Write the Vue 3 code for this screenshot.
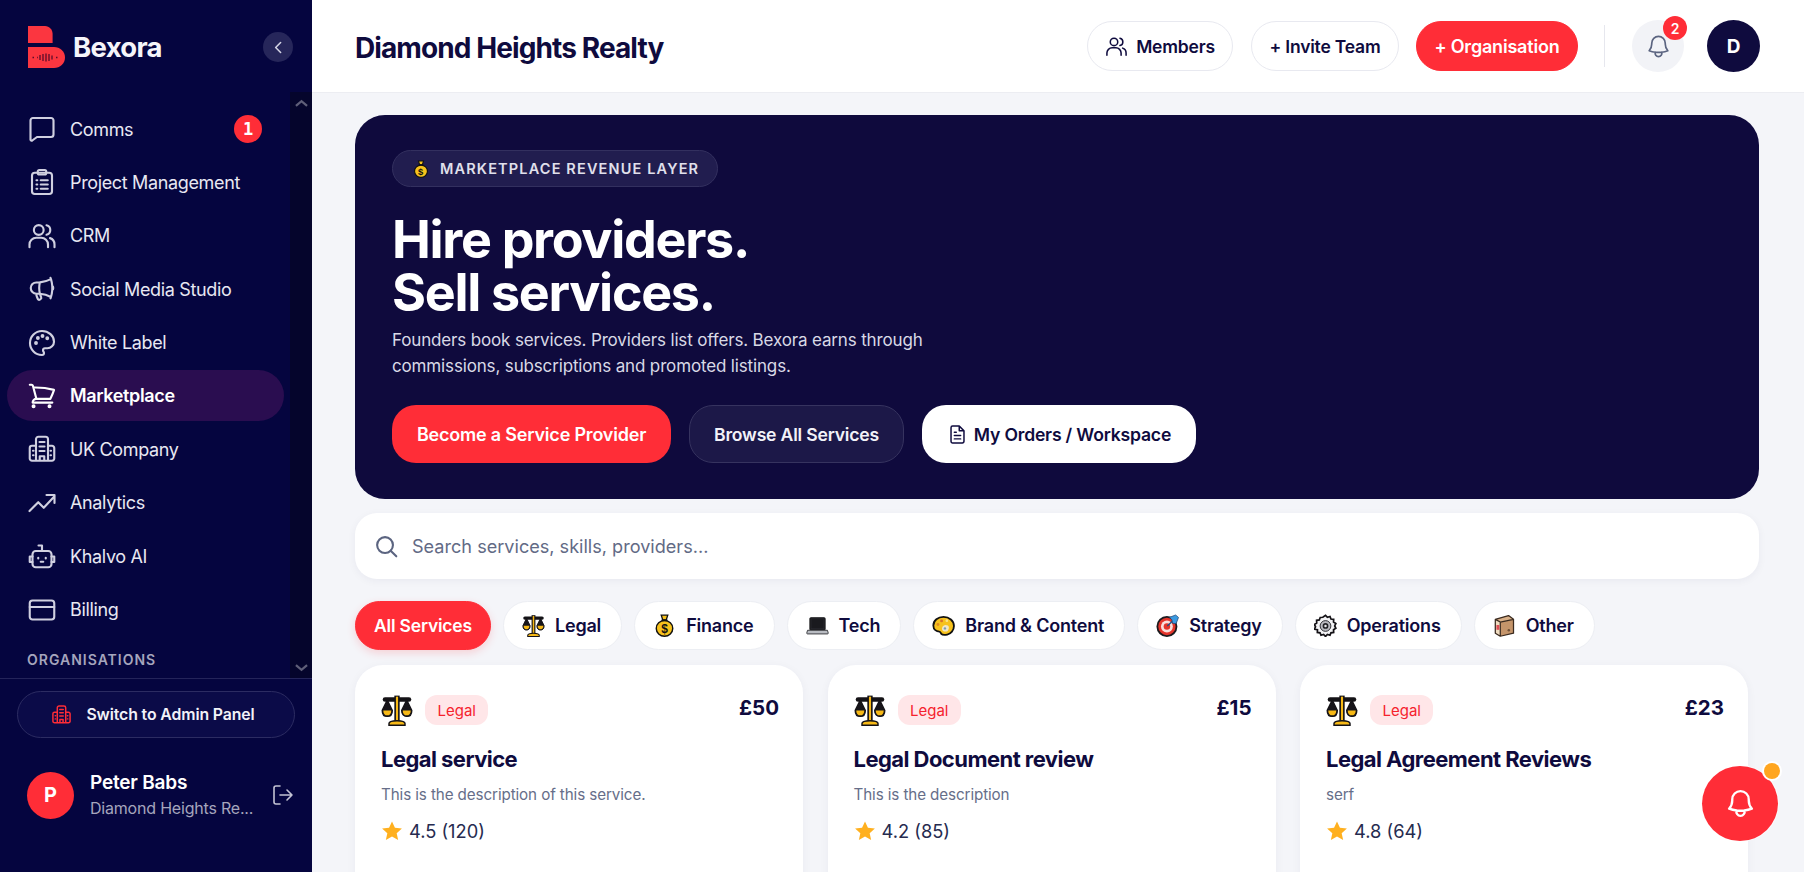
<script setup>
const icons = {
  comms: '<path d="M2.800 5.200A2 2 0 0 1 4.800 3.200h14.400a2 2 0 0 1 2 2v11.200a2 2 0 0 1-2 2H8l-3.800 2.800a.9.9 0 0 1-1.400-.7z"/>',
  project: '<rect x="4" y="4.600" width="16" height="17" rx="2.200"/><rect x="8.600" y="2.400" width="6.800" height="3.600" rx="1.200"/><path d="M7.600 10.600h.6M11 10.600h5.600M7.600 14h.6M11 14h5.600M7.600 17.400h.6M11 17.400h5.600"/>',
  crm: '<circle cx="9.400" cy="7.200" r="3.900"/><path d="M2 21v-2.200a5.400 5.400 0 0 1 5.400-5.400h4a5.400 5.400 0 0 1 5.400 5.400V21M15.600 3.400a3.900 3.900 0 0 1 0 7.600M18.400 13.700a5.300 5.300 0 0 1 3.600 5V21"/>',
  social: '<path d="M10.340 15.840c-.688-.06-1.386-.09-2.090-.09H7.500a4.500 4.500 0 1 1 0-9h.75c.704 0 1.402-.03 2.090-.09m0 9.180c.253.962.584 1.892.985 2.783.247.55.06 1.210-.463 1.511l-.657.38c-.551.318-1.260.117-1.527-.461a20.845 20.845 0 0 1-1.440-4.282m3.102.069a18.030 18.030 0 0 1-.59-4.590c0-1.586.205-3.124.59-4.590m0 9.180a23.848 23.848 0 0 1 8.835 2.535M10.340 6.660a23.847 23.847 0 0 0 8.835-2.535m0 0A23.740 23.740 0 0 0 18.795 3m.38 1.125a23.910 23.910 0 0 1 1.014 5.395m-1.014 8.855c-.118.38-.245.754-.38 1.125m.38-1.125a23.910 23.910 0 0 0 1.014-5.395m0-3.460c.495.413.811 1.035.811 1.730 0 .695-.316 1.317-.811 1.730m0-3.460a24.347 24.347 0 0 1 0 3.460"/>',
  white: '<path d="M12 2.400C6.700 2.400 2.400 6.700 2.400 12s4.300 9.600 9.600 9.600c.9 0 1.600-.7 1.600-1.600 0-.4-.2-.8-.4-1.100-.3-.3-.4-.6-.4-1.100a1.600 1.600 0 0 1 1.600-1.600h1.900c2.900 0 5.300-2.400 5.300-5.300C21.600 6.200 17.300 2.400 12 2.400z"/><circle cx="7.200" cy="12" r=".7" fill="currentColor"/><circle cx="8.700" cy="8" r=".7" fill="currentColor"/><circle cx="12.400" cy="6.400" r=".7" fill="currentColor"/><circle cx="16.200" cy="8.200" r=".7" fill="currentColor"/>',
  market: '<path d="M2.250 3h1.386c.51 0 .955.343 1.087.835l.383 1.437M7.500 14.250a3 3 0 0 0-3 3h15.750m-12.750-3h11.218c1.121-2.300 2.100-4.684 2.924-7.138a60.114 60.114 0 0 0-16.536-1.840M7.500 14.250 5.106 5.272M6 20.250a.75.75 0 1 1-1.500 0 .75.75 0 0 1 1.500 0Zm12.750 0a.75.75 0 1 1-1.500 0 .75.75 0 0 1 1.500 0Z"/>',
  company: '<path d="M7.200 21.400V4.200a2 2 0 0 1 2-2h5.600a2 2 0 0 1 2 2v17.200M7.200 9.400H4a1.800 1.800 0 0 0-1.800 1.800v8.400A1.800 1.800 0 0 0 4 21.400h16a1.800 1.800 0 0 0 1.800-1.800v-8.400A1.800 1.800 0 0 0 20 9.400h-3.200M10 6.400h4M10 10h4M10 13.600h4M10.200 21.400v-3.600h3.600v3.600M4.800 13.400h.4M4.800 17h.4M18.800 13.400h.4M18.800 17h.4"/>',
  analytics: '<path d="M2 18.400 9 11.400l4.400 4.400 8.400-9M15.600 5.600h6.400V12"/>',
  bot: '<rect x="4.400" y="8" width="15.200" height="13" rx="2.600"/><path d="M12 8V3.600H9.200M4.400 12.400H2.200v4.400h2.200M19.600 12.400h2.200v4.400h-2.200M9 13.400v.6M15 13.400v.6M11 16.600h2"/>',
  billing: '<rect x="2.200" y="4.400" width="19.600" height="15.200" rx="2.200"/><path d="M2.200 9.600h19.600"/>',
  bell: '<path d="M14.857 17.082a23.848 23.848 0 0 0 5.454-1.310A8.967 8.967 0 0 1 18 9.750V9A6 6 0 0 0 6 9v.75a8.967 8.967 0 0 1-2.312 6.022c1.733.64 3.560 1.085 5.455 1.310m5.714 0a24.255 24.255 0 0 1-5.714 0m5.714 0a3 3 0 1 1-5.714 0"/>',
  logout: '<path d="M9 21H5a2 2 0 0 1-2-2V5a2 2 0 0 1 2-2h4M16 17l5-5-5-5M21 12H9"/>',
  doc: '<path d="M14 2.400H6.400a1.800 1.800 0 0 0-1.800 1.800v15.600a1.800 1.800 0 0 0 1.800 1.800h11.200a1.800 1.800 0 0 0 1.800-1.800V7.800zM14 2.400v5.400h5.400M8.400 9.400h2.200M8.400 13.200h7.200M8.400 17h7.200"/>',
  search: '<circle cx="10.600" cy="10.600" r="7.600"/><path d="m21.400 21.400-5.400-5.400"/>',
  members: '<circle cx="9.400" cy="7.200" r="3.900"/><path d="M2 21v-2.200a5.400 5.400 0 0 1 5.400-5.400h4a5.400 5.400 0 0 1 5.400 5.400V21M15.600 3.400a3.900 3.900 0 0 1 0 7.600M18.400 13.700a5.300 5.300 0 0 1 3.600 5V21"/>'
}

const emoji = {
  scales: '<path d="M3 4.200h18" stroke="#141216" stroke-width="3.400" stroke-linecap="round"/><path d="M12 1.200v19" stroke="#141216" stroke-width="4"/><path d="M.9 12.300 4.700 4.500l3.800 7.800c0 3-1.700 4.500-3.800 4.500S.9 15.300.9 12.300zM15.500 12.300l3.800-7.800 3.800 7.800c0 3-1.700 4.500-3.800 4.500s-3.800-1.500-3.800-4.500z" fill="#17151a" stroke="#141216" stroke-width="1"/><path d="M1.700 12.300h6c0 2.500-1.300 3.700-3 3.700s-3-1.200-3-3.700zM16.300 12.300h6c0 2.500-1.300 3.700-3 3.700s-3-1.200-3-3.700z" fill="#f7b916"/><path d="M12 2v18.500" stroke="#f7b916" stroke-width="1.600"/><path d="M6 23.400h12v-1.200c0-1.500-2-2.200-6-2.200s-6 .7-6 2.200z" fill="#f7b916" stroke="#141216" stroke-width="1.100"/>',
  bag: '<path d="M8.600 1.200h6.800l-1.600 5h-3.600z" fill="#f7c21c" stroke="#111" stroke-width="1.400"/><ellipse cx="12" cy="15" rx="8.600" ry="8.200" fill="#f7c21c" stroke="#111" stroke-width="1.500"/><path d="M8.800 6.600h6.400" stroke="#111" stroke-width="1.600"/><text x="12" y="19.600" text-anchor="middle" font-family="Liberation Sans,sans-serif" font-size="12.500" font-weight="700" fill="#111">$</text>',
  laptop: '<rect x="4.200" y="4" width="15.600" height="12.600" rx="1" fill="#2b2b30" stroke="#17171a" stroke-width="1.400"/><rect x="5.600" y="5.400" width="12.800" height="9.600" fill="#1a1a1e"/><path d="M1.600 17h20.800l.8 2.800c.1.6-.2 1-.8 1H1.600c-.6 0-.9-.4-.8-1z" fill="#b9bcc2" stroke="#3b3c40" stroke-width="1"/>',
  palette: '<path d="M12 3C6.300 3 1.400 6.700 1.400 12c0 4.500 3.400 6.300 6.400 6.400.9 0 1 1.200 1.900 2.300 1 1.200 3.600 1.300 6.200.8 3.800-.8 7-4.300 7-9 0-5.400-4.900-9.500-10.900-9.500z" fill="#f7c21c" stroke="#111" stroke-width="1.900"/><path d="M10.500 14.500c1-2.800 3.500-3.600 6-2.400 1.700.8 1.300 4-.2 5.600-1.700 1.600-6.700.2-5.800-3.200z" fill="#efe6c8"/><circle cx="6.200" cy="11" r="1.500" fill="#e08a1e"/><circle cx="10" cy="7.200" r="1.500" fill="#d9722a"/><circle cx="15.500" cy="7" r="1.400" fill="#fae38a"/><circle cx="13.500" cy="15" r="1.300" fill="#7d9bb0"/>',
  target: '<circle cx="11.400" cy="13" r="10" fill="#e4352b" stroke="#1c1a1e" stroke-width="1.900"/><circle cx="11.400" cy="13" r="6.200" fill="#f9dfdc"/><circle cx="11.400" cy="13" r="3.400" fill="#e4352b"/><path d="M11.800 12.600 21 4" stroke="#244f84" stroke-width="1.500"/><path d="M14 3.500 20.500 1l3 2.600-2.500 6.500-3.800-.4-.6-3.600z" fill="#3b9ae0" stroke="#1c3f6b" stroke-width=".7"/>',
  gear: '<path d="M12 1.400 14 3.400l2.700-.8 1 2.600 2.800.4-.1 2.800 2.400 1.500-1.200 2.500 1.200 2.500-2.400 1.500.1 2.800-2.800.4-1 2.600-2.700-.8-2 2-2-2-2.700.8-1-2.600-2.800-.4.1-2.800L.4 15.900l1.200-2.500L.4 10.900l2.400-1.500-.1-2.800 2.800-.4 1-2.600L9.200 3.400z" fill="#f3f3f5" stroke="#141216" stroke-width="1.800"/><circle cx="12" cy="12.500" r="5.600" fill="#b9b9bf" stroke="#2b2b30" stroke-width="1"/><circle cx="12" cy="12.500" r="3" fill="#222226"/><circle cx="12" cy="12.500" r="1.300" fill="#e8e8ec"/>',
  box: '<path d="M7.600 8.400 21.400 5.600V20L7.600 23.200z" fill="#c4946a"/><path d="M2.400 5.600 7.600 8.400v14.800L2.400 20z" fill="#f0dcc0"/><path d="M2.400 5.600 16.200 1.600l5.200 4-13.800 2.800z" fill="#d9b088"/><path d="M2.400 5.600 16.200 1.600l5.200 4V20L7.600 23.200 2.400 20zM2.400 5.600l5.200 2.800 13.800-2.800M7.600 8.400v14.800" fill="none" stroke="#3a2a1f" stroke-width="1.300" stroke-linejoin="round"/><path d="M3.600 11.500h3v5h-3z" fill="#df4d55"/><circle cx="16.500" cy="17" r="1.300" fill="#6f5037"/>'
}

const nav = [
  { label: 'Comms', icon: 'comms', badge: 1 },
  { label: 'Project Management', icon: 'project' },
  { label: 'CRM', icon: 'crm' },
  { label: 'Social Media Studio', icon: 'social' },
  { label: 'White Label', icon: 'white' },
  { label: 'Marketplace', icon: 'market', active: true },
  { label: 'UK Company', icon: 'company' },
  { label: 'Analytics', icon: 'analytics' },
  { label: 'Khalvo AI', icon: 'bot' },
  { label: 'Billing', icon: 'billing' }
]
const chips = [
  { label: 'Legal', e: 'scales' },
  { label: 'Finance', e: 'bag' },
  { label: 'Tech', e: 'laptop' },
  { label: 'Brand & Content', e: 'palette' },
  { label: 'Strategy', e: 'target' },
  { label: 'Operations', e: 'gear' },
  { label: 'Other', e: 'box' }
]
const cards = [
  { price: '£50', title: 'Legal service', desc: 'This is the description of this service.', rating: '4.5 (120)' },
  { price: '£15', title: 'Legal Document review', desc: 'This is the description', rating: '4.2 (85)' },
  { price: '£23', title: 'Legal Agreement Reviews', desc: 'serf', rating: '4.8 (64)' }
]
</script>

<template>
  <div class="app">
    <aside class="sidebar">
      <div class="brand">
        <svg class="logo" viewBox="0 0 37 42" aria-hidden="true">
          <path d="M0 0h17c4.500 0 7.600 3.800 7.600 8v9H0z" fill="#fb3640"/>
          <path d="M0 21h26c6 0 11 4.500 11 10.500S32 42 26 42H0z" fill="#fb3640"/>
          <path d="M4.500 31.500h1.500M9 31.500h.8M12 29v5M15 28v7M18 27.500v8M21 28v7M24 29.500v4M28 31.500h1.500" stroke="#5a0d2a" stroke-width="1.300" fill="none"/>
        </svg>
        <span class="wordmark">Bexora</span>
        <button class="collapse">
          <svg viewBox="0 0 24 24" width="17" height="17" fill="none" stroke="#d4d4e4" stroke-width="2.200" stroke-linecap="round" stroke-linejoin="round"><path d="m15 5-7 7 7 7"/></svg>
        </button>
      </div>

      <div class="nav-wrap">
        <nav class="nav">
          <a v-for="item in nav" :key="item.label" class="nav-item" :class="{ active: item.active }">
            <svg class="nav-icon" viewBox="0 0 24 24" fill="none" stroke="currentColor" stroke-width="1.700" stroke-linecap="round" stroke-linejoin="round" v-html="icons[item.icon]"></svg>
            <span class="nav-label">{{ item.label }}</span>
            <span v-if="item.badge" class="nav-badge">{{ item.badge }}</span>
          </a>
        </nav>
        <div class="section-label">ORGANISATIONS</div>
        <div class="scroll-track">
          <svg viewBox="0 0 14 8" width="13" height="8" fill="none" stroke="#5f5f78" stroke-width="2.400"><path d="m1 7 6-5 6 5"/></svg>
          <svg viewBox="0 0 14 8" width="13" height="8" fill="none" stroke="#5f5f78" stroke-width="2.400"><path d="m1 1 6 5 6-5"/></svg>
        </div>
      </div>

      <div class="side-foot">
        <button class="admin-btn">
          <svg viewBox="0 0 24 24" width="21" height="21" fill="none" stroke="#ff2d37" stroke-width="1.700" stroke-linecap="round" stroke-linejoin="round" v-html="icons.company"></svg>
          <span>Switch to Admin Panel</span>
        </button>
        <div class="user">
          <div class="user-avatar">P</div>
          <div class="user-text">
            <div class="user-name">Peter Babs</div>
            <div class="user-org">Diamond Heights Re...</div>
          </div>
          <svg class="logout" viewBox="0 0 24 24" fill="none" stroke="#c4c4d4" stroke-width="1.600" stroke-linecap="round" stroke-linejoin="round" v-html="icons.logout"></svg>
        </div>
      </div>
    </aside>

    <main class="main">
      <header class="topbar">
        <h1 class="page-title">Diamond Heights Realty</h1>
        <div class="top-actions">
          <button class="pill-btn members">
            <svg viewBox="0 0 24 24" width="23" height="23" fill="none" stroke="#0f0b3e" stroke-width="1.600" stroke-linecap="round" stroke-linejoin="round" v-html="icons.members"></svg>
            Members
          </button>
          <button class="pill-btn invite">+ Invite Team</button>
          <button class="pill-btn red">+ Organisation</button>
          <span class="divider"></span>
          <button class="bell-btn">
            <svg viewBox="0 0 24 24" width="27" height="27" fill="none" stroke="#5b6480" stroke-width="1.500" stroke-linecap="round" stroke-linejoin="round" v-html="icons.bell"></svg>
            <span class="bell-badge">2</span>
          </button>
          <div class="avatar">D</div>
        </div>
      </header>

      <div class="content">
        <section class="hero">
          <div class="hero-chip">
            <svg viewBox="0 0 24 24" width="18" height="18" v-html="emoji.bag"></svg>
            <span>MARKETPLACE REVENUE LAYER</span>
          </div>
          <h2 class="hero-title">Hire providers.<br>Sell services.</h2>
          <p class="hero-text">Founders book services. Providers list offers. Bexora earns through<br>commissions, subscriptions and promoted listings.</p>
          <div class="hero-actions">
            <button class="hero-btn red">Become a Service Provider</button>
            <button class="hero-btn ghost">Browse All Services</button>
            <button class="hero-btn white">
              <svg viewBox="0 0 24 24" width="21" height="21" fill="none" stroke="#0f0b3e" stroke-width="1.700" stroke-linecap="round" stroke-linejoin="round" v-html="icons.doc"></svg>
              My Orders / Workspace
            </button>
          </div>
        </section>

        <div class="search">
          <svg viewBox="0 0 24 24" width="25" height="25" fill="none" stroke="#5b6480" stroke-width="2" stroke-linecap="round" v-html="icons.search"></svg>
          <span>Search services, skills, providers...</span>
        </div>

        <div class="chips">
          <button class="chip on">All Services</button>
          <button v-for="c in chips" :key="c.label" class="chip">
            <svg viewBox="0 0 24 24" width="23" height="23" v-html="emoji[c.e]"></svg>
            {{ c.label }}
          </button>
        </div>

        <div class="cards">
          <article v-for="card in cards" :key="card.title" class="card">
            <div class="card-top">
              <svg viewBox="0 0 24 24" width="32" height="32" v-html="emoji.scales"></svg>
              <span class="tag">Legal</span>
              <span class="price">{{ card.price }}</span>
            </div>
            <h3 class="card-title">{{ card.title }}</h3>
            <p class="card-desc">{{ card.desc }}</p>
            <div class="rating">
              <svg viewBox="0 0 24 24" width="22" height="22"><path d="m12 1.500 3.200 7 7.600.800-5.700 5.100 1.600 7.500L12 18.100l-6.700 3.800 1.600-7.500L1.200 9.300l7.600-.800z" fill="#ffb01f"/></svg>
              <span>{{ card.rating }}</span>
            </div>
          </article>
        </div>
      </div>

      <button class="fab">
        <svg viewBox="0 0 24 24" width="33" height="33" fill="none" stroke="#fff" stroke-width="1.700" stroke-linecap="round" stroke-linejoin="round" v-html="icons.bell"></svg>
        <span class="fab-dot"></span>
      </button>
    </main>
  </div>
</template>

<style>
html, body { margin: 0; background: #f4f5f9; }
</style>

<style scoped>
.app {
  display: flex;
  width: 1804px;
  height: 872px;
  overflow: hidden;
  font-family: "Inter", "Liberation Sans", sans-serif;
  color: #0f0b3e;
  background: #f4f5f9;
}
button { font-family: inherit; border: 0; cursor: pointer; padding: 0; }
h1, h2, h3, p { margin: 0; }

.sidebar {
  width: 312px;
  flex: none;
  display: flex;
  flex-direction: column;
  background: #05053f;
  color: #f2f2f8;
}
.brand {
  height: 92px;
  flex: none;
  display: flex;
  align-items: center;
  padding: 0 19px 0 28px;
  box-sizing: border-box;
}
.logo { width: 37px; height: 42px; margin-right: 8px; margin-top: 2px; }
.wordmark { font-size: 27.500px; font-weight: 700; color: #f5f5fa; letter-spacing: -0.7px; margin-top: 2px; }
.collapse {
  margin-left: auto;
  margin-top: 2px;
  width: 30px;
  height: 30px;
  border-radius: 50%;
  background: #26265a;
  display: flex;
  align-items: center;
  justify-content: center;
}
.nav-wrap { position: relative; height: 586px; flex: none; overflow: hidden; }
.nav {
  display: flex;
  flex-direction: column;
  gap: 2.400px;
  padding: 11.500px 0 0 7px;
}
.nav-item {
  width: 277px;
  height: 51px;
  box-sizing: border-box;
  padding-left: 20px;
  display: flex;
  align-items: center;
  gap: 13px;
  border-radius: 26px;
  font-size: 18px;
  font-weight: 400;
  letter-spacing: -0.35px;
  color: #e8e8f2;
}
.nav-item.active {
  background: #2a0d50;
  font-weight: 600;
  color: #fff;
}
.nav-icon { width: 30px; height: 30px; color: #d0d0e0; flex: none; }
.nav-item.active .nav-icon { color: #fff; }
.nav-badge {
  margin-left: auto;
  margin-right: 22px;
  width: 28px;
  height: 28px;
  border-radius: 50%;
  background: #ff2d37;
  color: #fff;
  font: 700 17px "DejaVu Sans Mono", monospace;
  display: flex;
  align-items: center;
  justify-content: center;
}
.section-label {
  margin: 16px 0 0 27px;
  font-size: 14px;
  font-weight: 600;
  letter-spacing: 1px;
  color: #a5a5bd;
}
.scroll-track {
  position: absolute;
  top: 0;
  right: 0;
  bottom: 0;
  width: 22px;
  background: rgba(5, 5, 30, 0.55);
  display: flex;
  flex-direction: column;
  justify-content: space-between;
  align-items: center;
  padding: 7px 0 6px;
  box-sizing: border-box;
}
.side-foot {
  flex: 1;
  border-top: 1px solid #24245a;
  padding: 12px 17px 0;
}
.admin-btn {
  width: 278px;
  height: 47px;
  padding-right: 6px;
  border-radius: 24px;
  border: 1px solid #2c2c62;
  background: #0b0b48;
  color: #f2f2f8;
  font-size: 15.800px;
  font-weight: 600;
  letter-spacing: -0.1px;
  display: flex;
  align-items: center;
  justify-content: center;
  gap: 14px;
}
.user {
  display: flex;
  align-items: center;
  margin: 31px 0 0 10px;
  gap: 16px;
}
.user-avatar {
  width: 47px;
  height: 47px;
  border-radius: 50%;
  background: #ff2d37;
  color: #fff;
  font-size: 20px;
  font-weight: 700;
  display: flex;
  align-items: center;
  justify-content: center;
  flex: none;
}
.user-text { flex: 1; min-width: 0; }
.user-name { font-size: 19px; font-weight: 600; color: #fff; letter-spacing: -0.2px; line-height: 27px; }
.user-org { font-size: 16px; color: #a5a5bd; line-height: 25px; letter-spacing: -0.2px; white-space: nowrap; }
.logout { width: 24px; height: 24px; flex: none; }

.main { flex: 1; min-width: 0; position: relative; display: flex; flex-direction: column; }
.topbar {
  height: 93px;
  flex: none;
  box-sizing: border-box;
  background: #fff;
  border-bottom: 1px solid #ecedf2;
  display: flex;
  align-items: center;
  justify-content: space-between;
  padding: 0 44px 0 43px;
}
.page-title { font-size: 28px; font-weight: 700; letter-spacing: -0.9px; color: #0f0b3e; margin-top: 3px; }
.top-actions { display: flex; align-items: center; }
.pill-btn {
  height: 50px;
  box-sizing: border-box;
  margin-right: 17px;
  border: 1px solid #e8e9f0;
  border-radius: 25px;
  background: #fff;
  color: #0f0b3e;
  font-size: 17.500px;
  font-weight: 600;
  letter-spacing: -0.2px;
  display: flex;
  align-items: center;
  justify-content: center;
  gap: 8px;
}
.pill-btn.members { width: 146px; margin-right: 18px; }
.pill-btn.invite { width: 148px; }
.pill-btn.red {
  width: 162px;
  background: #ff2d37;
  border-color: #ff2d37;
  color: #fff;
  font-size: 18px;
  margin-right: 26px;
}
.divider { width: 1px; height: 42px; background: #e6e7ee; margin-right: 27px; }
.bell-btn {
  position: relative;
  width: 52px;
  height: 52px;
  border-radius: 50%;
  background: #f2f3f7;
  display: flex;
  align-items: center;
  justify-content: center;
  margin-right: 23px;
}
.bell-badge {
  position: absolute;
  top: -4px;
  right: -3px;
  width: 24px;
  height: 24px;
  border-radius: 50%;
  background: #ff2d37;
  color: #fff;
  font-size: 14px;
  font-weight: 600;
  display: flex;
  align-items: center;
  justify-content: center;
}
.avatar {
  width: 53px;
  height: 52px;
  border-radius: 50%;
  background: #0f0b3e;
  color: #fff;
  font-size: 19px;
  font-weight: 700;
  display: flex;
  align-items: center;
  justify-content: center;
}

.content { padding: 22px 45px 0 43px; }
.hero {
  height: 384px;
  box-sizing: border-box;
  border-radius: 30px;
  background: #0f0a3d;
  padding: 35px 37px 0;
  color: #fff;
}
.hero-chip {
  display: inline-flex;
  align-items: center;
  gap: 10px;
  height: 37px;
  box-sizing: border-box;
  padding: 0 18px 0 19px;
  border-radius: 19px;
  border: 1px solid #33305f;
  background: #211d4f;
  color: #e0e0ec;
  font-size: 14.500px;
  font-weight: 600;
  letter-spacing: 1.150px;
}
.hero-title {
  margin-top: 26px;
  font-size: 52px;
  line-height: 53px;
  font-weight: 700;
  letter-spacing: -1.300px;
  color: #fff;
}
.hero-text {
  margin-top: 8px;
  font-size: 17px;
  line-height: 26px;
  color: #d9d9e6;
  letter-spacing: -0.15px;
}
.hero-actions { display: flex; gap: 18px; margin-top: 26px; }
.hero-btn {
  height: 58px;
  border-radius: 24px;
  font-size: 17.600px;
  font-weight: 600;
  letter-spacing: -0.2px;
  display: flex;
  align-items: center;
  justify-content: center;
  gap: 6px;
  box-sizing: border-box;
}
.hero-btn.red { width: 279px; background: #ff2d37; color: #fff; font-size: 18px; }
.hero-btn.ghost { width: 215px; background: #1c1848; border: 1px solid #36335f; color: #f2f2f8; }
.hero-btn.white { width: 274px; background: #fff; color: #0f0b3e; }

.search {
  margin-top: 14px;
  height: 66px;
  box-sizing: border-box;
  padding: 0 19px;
  border-radius: 22px;
  background: #fff;
  box-shadow: 0 2px 8px rgba(20, 20, 70, 0.05);
  display: flex;
  align-items: center;
  gap: 13px;
  color: #626a85;
  font-size: 18.100px;
}
.chips { display: flex; gap: 12px; margin-top: 22px; }
.chip {
  height: 49px;
  box-sizing: border-box;
  padding: 0 20px 0 18px;
  border: 1px solid #eceef3;
  border-radius: 25px;
  background: #fff;
  color: #0f0b3e;
  font-size: 18px;
  font-weight: 600;
  letter-spacing: -0.2px;
  display: flex;
  align-items: center;
  gap: 10px;
}
.chip.on { background: #ff2d37; border-color: #ff2d37; color: #fff; padding: 0; width: 136px; justify-content: center; font-size: 17.500px; box-shadow: 0 3px 8px rgba(255, 45, 55, 0.18); }
.cards {
  display: grid;
  grid-template-columns: repeat(3, 1fr);
  gap: 24.500px;
  margin-top: 15px;
  padding-right: 11px;
}
.card {
  height: 240px;
  box-sizing: border-box;
  padding: 29px 26px 0;
  border-radius: 28px;
  background: #fff;
  box-shadow: 0 2px 10px rgba(20, 20, 70, 0.05);
}
.card-top { display: flex; align-items: center; height: 32px; }
.tag {
  margin-left: 12px;
  height: 30px;
  padding: 0 12.500px;
  border-radius: 12px;
  background: #ffe6e8;
  color: #f5222d;
  font-size: 15px;
  display: flex;
  align-items: center;
}
.price { margin-left: auto; margin-right: -2px; margin-top: -6px; font-size: 20.500px; font-weight: 700; color: #0f0b3e; }
.card-title { margin-top: 17.500px; font-size: 22px; line-height: 30px; font-weight: 700; letter-spacing: -0.55px; color: #0f0b3e; }
.card-desc { margin-top: 10px; font-size: 15.200px; line-height: 22px; color: #666e89; letter-spacing: -0.1px; }
.rating { display: flex; align-items: center; gap: 6px; margin-top: 14.500px; font-size: 18.300px; color: #262b4f; }

.fab {
  position: absolute;
  left: 1390px;
  top: 766px;
  width: 76px;
  height: 75px;
  border-radius: 50%;
  background: #ff2d37;
  box-shadow: 0 0 0 1px rgba(255, 255, 255, 0.6);
  display: flex;
  align-items: center;
  justify-content: center;
}
.fab-dot {
  position: absolute;
  top: -3px;
  right: -2px;
  width: 16px;
  height: 16px;
  border-radius: 50%;
  background: #ffa51f;
  box-shadow: 0 0 0 2px #fff;
}
</style>
